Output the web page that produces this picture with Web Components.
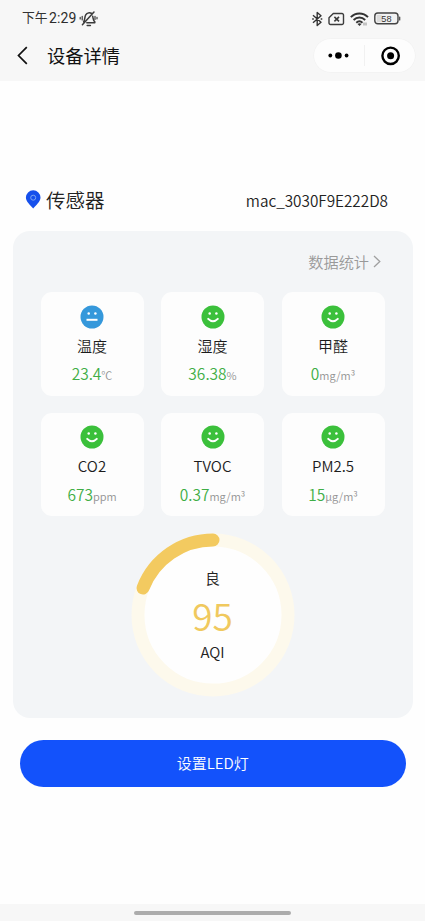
<!DOCTYPE html>
<html lang="zh-CN">
<head>
<meta charset="utf-8">
<title>设备详情</title>
<style>
html,body{margin:0;height:100%;background:#fefefe}
body{font-family:"Noto Sans CJK SC",sans-serif;font-weight:350;color:#222}
</style>
</head>
<body>
<device-page></device-page>
<script>
function define(name, html, init){
  const t=document.createElement('template');
  t.innerHTML=html;
  customElements.define(name,class extends HTMLElement{
    connectedCallback(){
      if(this.shadowRoot)return;
      const root=this.attachShadow({mode:'open'});
      root.appendChild(t.content.cloneNode(true));
      if(init)init.call(this,root);
    }
  });
}

define('status-bar',`
<style>
:host{display:flex;align-items:center;height:36px;padding:0 24px 0 22px;font-size:12.8px;font-weight:400;line-height:36px;color:#333}
.time{display:flex;white-space:nowrap}
.time b{font:400 14px/38px Roboto,sans-serif;letter-spacing:.1px;margin-left:1.500px;color:#2c2c2c}
svg{display:block;flex:none}
.bell{margin:1px 0 0 2px}
.right{display:flex;align-items:center;margin-left:auto;padding-top:1px}
</style>
<span class="time">下午<b>2:29</b></span>
<svg class="bell" width="19" height="18" viewBox="0 0 19 18" fill="none" stroke="#3c3c3c" stroke-width="1.5" stroke-linecap="round" stroke-linejoin="round">
<path d="M4.600 11.800C6.200 10.300 5.400 6.800 6.700 4.800 8 2.700 10.800 2.300 12.800 3.500M13.700 6.300c.5 1.800.2 3.700 2.100 5.500v1H7.800M3.400 14.800 15 2M8.200 15.600h3.200"/>
<path d="M3.200 6.300v3.600M1.200 7.400v1.600M16 6.300v3.200M18 7.400v1.400" stroke-width="1.200"/></svg>
<div class="right">
<svg width="11" height="16" viewBox="0 0 11 16" fill="none" stroke="#333" stroke-width="1.400" stroke-linejoin="round"><path d="M1 4.300 9 11.200 5.200 14.500V1.500L9 4.700 1 11.700"/><path d="M.2 8h1.600M8.700 8h1.600"/></svg>
<svg style="margin-left:5px" width="17" height="14" viewBox="0 0 17 14" fill="none" stroke="#3c3c3c" stroke-width="1.400"><path d="M5.300 1.500H14a1.500 1.500 0 0 1 1.500 1.500v8a1.500 1.500 0 0 1-1.500 1.500H2.500A1.500 1.500 0 0 1 1 11V5.800z" stroke-linejoin="round"/><path d="m6.400 4.900 4.600 4.400m0-4.400L6.400 9.300" stroke-width="1.600"/></svg>
<svg style="margin-left:5px" width="19" height="14" viewBox="0 0 19 14" fill="none" stroke="#333" stroke-width="1.900"><path d="M.8 5.200c4.800-4.900 12.400-4.900 17.200 0M3.600 8c3.400-3.300 8.200-3.300 11.600 0M6.300 10.700c1.900-1.700 4.300-1.700 6.200 0"/><path d="m7.500 12 2 2 2-2q-2-1.300-4 0" fill="#333" stroke="none"/><path d="M14 10.500v3M16 10.500v3" stroke-width=".8" stroke="#777"/></svg>
<svg style="margin-left:5px" width="27" height="13" viewBox="0 0 27 13"><rect x=".8" y="1" width="23.200" height="10.800" rx="3" fill="#f2f2f2" stroke="#444" stroke-width="1.400"/><path d="M2.800 3h5v7h-5z" fill="#ddd"/><path d="M25.700 5v3" stroke="#444" stroke-width="1.200" stroke-linecap="round"/><text x="12.400" y="9.800" text-anchor="middle" font-family="Liberation Sans,sans-serif" font-size="9.200" fill="#333">58</text></svg>
</div>`);

define('nav-bar',`
<style>
:host{display:flex;align-items:center;height:40px;padding:0 10px 0 17px;margin-bottom:5px}
.back{display:block;flex:none;margin-top:-1px}
h1{margin:-2px 0 0 19px;font-size:18.300px;line-height:38px;font-weight:400;color:#111}
.capsule{display:flex;align-items:center;margin:-1px 0 0 auto;width:101px;height:33px;border-radius:17px;background:#fdfdfd;box-shadow:0 0 0 .5px #f0f0f0}
.capsule svg{display:block}
</style>
<svg class="back" width="11" height="19" viewBox="0 0 11 19" fill="none" stroke="#111" stroke-width="1.700"><path d="M9.800 1.200 1.500 9.500l8.300 8.300"/></svg>
<h1><slot></slot></h1>
<div class="capsule"><svg width="101" height="33" viewBox="0 0 101 33"><g fill="#000"><circle cx="16.300" cy="16.500" r="1.900"/><circle cx="24.400" cy="16.500" r="3.300"/><circle cx="32.600" cy="16.500" r="1.900"/><circle cx="76.600" cy="16.800" r="3.500"/></g><path d="M50.500 6v21" stroke="#f1f1f1"/><circle cx="76.600" cy="16.800" r="8.200" fill="none" stroke="#000" stroke-width="2.400"/></svg></div>`);

define('sensor-title',`
<style>
:host{display:flex;align-items:center;height:40px;padding:0 37px 0 25px}
svg{display:block;flex:none;margin-top:-1px}
h2{margin:0 0 0 6px;font-size:19.500px;line-height:38px;font-weight:350;color:#222}
.mac{margin-left:auto;font-size:15.300px;line-height:40px;color:#222}
</style>
<svg width="16" height="19" viewBox="0 0 16 19"><path d="M8.200 18.600C5.500 15.400.9 11.700.9 7.600a7.300 7.300 0 0 1 14.600 0c0 4.100-4.600 7.800-7.300 11z" fill="#1650ec"/><circle cx="8.200" cy="7.700" r="2.500" fill="none" stroke="#7fa6f0" stroke-width="1"/></svg>
<h2 style="margin-left:5px"><slot></slot></h2><span class="mac"><slot name="mac"></slot></span>`);

define('face-icon',`
<style>
:host{display:block;width:24px;height:24px}
svg{display:block}
.bg{fill:#3bc03b}
.flat{display:none}
:host([mood=neutral]) .bg{fill:#3598db}
:host([mood=neutral]) .flat{display:inline}
:host([mood=neutral]) .smile{display:none}
</style>
<svg width="24" height="24" viewBox="0 0 24 24"><circle class="bg" cx="12" cy="12" r="11.500"/><g fill="#fff"><circle cx="8.700" cy="8.600" r="1.250"/><circle cx="15.400" cy="8.600" r="1.250"/></g><g fill="none" stroke="#fff" stroke-width="2"><path class="smile" d="M7.200 13.900q4.800 4.800 9.600 0" stroke-linecap="round"/><path class="flat" d="M6.500 14.800h11"/></g></svg>`);

define('sensor-card',`
<style>
:host{display:flex;flex-direction:column;align-items:center;box-sizing:border-box;height:103.500px;padding-top:12.500px;border-radius:11px;background:#fdfdfd;white-space:nowrap}
.name{font-size:15px;line-height:22px;margin-top:6px;color:#1c1c1c}
.value{font-size:15.500px;line-height:22px;margin-top:5.500px;color:#3fae46}
.unit{font-size:11px;color:#929292}
</style>
<face-icon></face-icon>
<div class="name"><slot></slot></div>
<div class="value"><span class="num"></span><span class="unit"></span></div>`,
function(root){
  root.querySelector('face-icon').setAttribute('mood',this.getAttribute('mood')||'happy');
  root.querySelector('.num').textContent=this.getAttribute('value');
  root.querySelector('.unit').textContent=this.getAttribute('unit');
});

define('aqi-gauge',`
<style>
:host{display:grid;width:164px;height:164px;margin:0 auto}
svg,.text{grid-area:1/1}
svg{display:block}
.text{display:flex;flex-direction:column;align-items:center;color:#222;font-size:15px;line-height:22px;padding-top:33.500px;z-index:1}
.num{font-size:37px;line-height:44px;font-weight:350;color:#f0c95e;margin:4px 0 4.500px}
</style>
<svg width="164" height="164" viewBox="0 0 164 164"><circle cx="82" cy="82" r="75" fill="#fefefe" stroke="#fdf9ec" stroke-width="13"/><path d="M82 7A75 75 0 0 0 12 55" fill="none" stroke="#f3ca60" stroke-width="13" stroke-linecap="round"/></svg>
<div class="text"><slot name="level"></slot><span class="num"><slot></slot></span><span>AQI</span></div>`);

define('sensor-panel',`
<style>
:host{display:block;box-sizing:border-box;height:487px;margin:11px 12.500px 0;padding:0 28px;border-radius:17px;background:#f3f5f7}
.more{display:flex;justify-content:flex-end;align-items:center;height:61px;padding-right:3.500px;font-size:15.200px;line-height:56px;color:#999}
.more span{margin-top:-2px}
.more svg{display:block;margin-left:4px}
.grid{display:grid;grid-template-columns:repeat(3,103px);justify-content:space-between;row-gap:17px;margin-bottom:17px}
</style>
<div class="more"><span>数据统计</span><svg width="8" height="13" viewBox="0 0 8 13" fill="none" stroke="#a0a0a0" stroke-width="1.300"><path d="m1 1 5.800 5.500L1 12"/></svg></div>
<div class="grid"><slot></slot></div>
<slot name="gauge"></slot>`);

define('action-button',`
<style>
:host{display:block;margin:21.500px 19.500px 0 20px}
button{display:block;width:100%;height:47.500px;border:0;border-radius:24px;padding:0;background:#1352fb;color:#fff;font:350 15px/46px "Noto Sans CJK SC",sans-serif}
</style>
<button><slot></slot></button>`);

define('home-indicator',`
<style>
:host{display:flex;justify-content:center;align-items:center;height:17px;background:#f7f7f7;margin-top:auto}
i{display:block;width:157px;height:4px;border-radius:2px;background:#acacac}
</style><i></i>`);

define('device-page',`
<style>
:host{display:flex;flex-direction:column;width:425px;height:921px;overflow:hidden;background:#fefefe}
header{height:81px;background:#f7f7f7;margin-bottom:99px;flex:none}
</style>
<header><status-bar></status-bar><nav-bar>设备详情</nav-bar></header>
<sensor-title>传感器<span slot="mac">mac_3030F9E222D8</span></sensor-title>
<sensor-panel>
<sensor-card mood="neutral" value="23.4" unit="℃">温度</sensor-card>
<sensor-card value="36.38" unit="%">湿度</sensor-card>
<sensor-card value="0" unit="mg/m³">甲醛</sensor-card>
<sensor-card value="673" unit="ppm">CO2</sensor-card>
<sensor-card value="0.37" unit="mg/m³">TVOC</sensor-card>
<sensor-card value="15" unit="μg/m³">PM2.5</sensor-card>
<aqi-gauge slot="gauge"><span slot="level">良</span>95</aqi-gauge>
</sensor-panel>
<action-button>设置LED灯</action-button>
<home-indicator></home-indicator>`);
</script>
</body>
</html>
